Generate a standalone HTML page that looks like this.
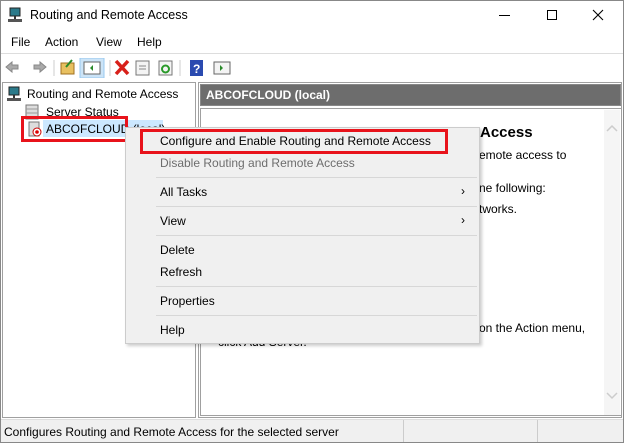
<!DOCTYPE html><html><head><style>
*{margin:0;padding:0;box-sizing:border-box}
body{width:624px;height:443px;overflow:hidden;background:#fff;font-family:"Liberation Sans",sans-serif;font-size:12px;color:#000;position:relative}
.a{position:absolute;white-space:nowrap}
.sep{position:absolute;left:156px;width:321px;height:1px;background:#d7d7d7}
</style></head><body>
<div class="a" style="left:0;top:0;width:624px;height:443px;border:1px solid #888"></div>
<svg class="a" style="left:7px;top:7px" width="16" height="16"><rect x="3" y="1" width="10" height="8" fill="#2b7a8a" stroke="#222"/><rect x="1" y="12" width="14" height="3" fill="#555"/><rect x="7" y="9" width="2" height="3" fill="#333"/></svg>
<div class="a" style="left:30px;top:8px;font-size:12.5px">Routing and Remote Access</div>
<div class="a" style="left:499px;top:15px;width:11px;height:1px;background:#000"></div>
<div class="a" style="left:547px;top:10px;width:10px;height:10px;border:1px solid #000"></div>
<svg class="a" style="left:592px;top:9px" width="12" height="12"><path d="M1 1L11 11M11 1L1 11" stroke="#000" stroke-width="1.1"/></svg>
<div class="a" style="left:11px;top:35px">File</div>
<div class="a" style="left:45px;top:35px">Action</div>
<div class="a" style="left:96px;top:35px">View</div>
<div class="a" style="left:137px;top:35px">Help</div>
<div class="a" style="left:1px;top:53px;width:622px;height:1px;background:#ddd"></div>
<div class="a" style="left:1px;top:54px;width:622px;height:27px;background:#fff"></div>
<svg class="a" style="left:4px;top:58px" width="240" height="20">
<path d="M2 9L8 4V7H14V11H8V14Z" fill="#aaa" stroke="#888"/>
<path d="M42 9L36 4V7H30V11H36V14Z" fill="#aaa" stroke="#888"/>
<line x1="50" y1="2" x2="50" y2="18" stroke="#ccc"/>
<rect x="57" y="5" width="13" height="11" fill="#e8c060" stroke="#a07020"/><path d="M62 9L68 2" stroke="#2a8a2a" stroke-width="2"/>
<rect x="76" y="0" width="24" height="20" fill="#cce4f7" stroke="#99c9ef"/><rect x="80" y="4" width="16" height="12" fill="#fff" stroke="#666"/><path d="M89 7L86 10L89 13Z" fill="#2a8a2a"/>
<line x1="106" y1="2" x2="106" y2="18" stroke="#ccc"/>
<path d="M112 3L124 16M124 3L112 16" stroke="#d8201a" stroke-width="3.5"/>
<rect x="132" y="3" width="13" height="14" fill="#f4f4f4" stroke="#777"/><path d="M135 8H142M135 11H142" stroke="#888"/>
<rect x="155" y="3" width="13" height="14" fill="#f4f4f4" stroke="#777"/><circle cx="161.5" cy="11" r="3.5" fill="none" stroke="#2a9a2a" stroke-width="2"/>
<line x1="176" y1="2" x2="176" y2="18" stroke="#ccc"/>
<rect x="186" y="2" width="13" height="16" fill="#2a4ab0"/><text x="189" y="15" fill="#fff" font-size="12" font-weight="bold">?</text>
<rect x="210" y="4" width="16" height="12" fill="#f4f4f4" stroke="#666"/><path d="M216 7L219 10L216 13Z" fill="#2a8a2a"/>
</svg>
<div class="a" style="left:2px;top:82px;width:194px;height:336px;border:1px solid #a0a0a0;background:#fff"></div>
<svg class="a" style="left:6px;top:86px" width="16" height="16"><rect x="3" y="1" width="10" height="8" fill="#2b7a8a" stroke="#222"/><rect x="1" y="12" width="14" height="3" fill="#555"/><rect x="7" y="9" width="2" height="3" fill="#333"/></svg>
<div class="a" style="left:27px;top:87px">Routing and Remote Access</div>
<svg class="a" style="left:24px;top:104px" width="16" height="16"><rect x="2" y="1" width="12" height="14" fill="#ddd" stroke="#777"/><path d="M2 5H14M2 9H14" stroke="#999"/></svg>
<div class="a" style="left:46px;top:105px">Server Status</div>
<div class="a" style="left:43px;top:120px;width:120px;height:17px;background:#cce8ff"></div>
<svg class="a" style="left:27px;top:121px" width="16" height="16"><rect x="2" y="1" width="10" height="14" fill="#ddd" stroke="#777"/><circle cx="10" cy="11" r="4" fill="#fff" stroke="#c00"/><circle cx="10" cy="11" r="1.8" fill="#d00"/></svg>
<div class="a" style="left:46px;top:122px">ABCOFCLOUD (local)</div>
<div class="a" style="left:21px;top:116px;width:107px;height:26px;border:3px solid #e8131b"></div>
<div class="a" style="left:198px;top:82px;width:424px;height:336px;border:1px solid #a0a0a0;background:#fff"></div>
<div class="a" style="left:200px;top:84px;width:421px;height:22px;background:#6d6d6d;border:1px solid #888"></div>
<div class="a" style="left:206px;top:88px;color:#fff;font-weight:bold">ABCOFCLOUD (local)</div>
<div class="a" style="left:200px;top:108px;width:421px;height:308px;border:1px solid #a0a0a0;border-right:none"></div>
<div class="a" style="left:604px;top:110px;width:16px;height:305px;background:#f5f5f5"></div>
<svg class="a" style="left:606px;top:124px" width="12" height="8"><path d="M1 7L6 2L11 7" stroke="#ccc" fill="none" stroke-width="1.5"/></svg>
<svg class="a" style="left:606px;top:392px" width="12" height="8"><path d="M1 1L6 6L11 1" stroke="#ccc" fill="none" stroke-width="1.5"/></svg>
<div class="a" style="left:480px;top:124px;font-size:15px;font-weight:bold">Access</div>
<div class="a" style="left:479px;top:148px">emote access to</div>
<div class="a" style="left:479px;top:181px">ne following:</div>
<div class="a" style="left:479px;top:202px">tworks.</div>
<div class="a" style="left:479px;top:321px">on the Action menu,</div>
<div class="a" style="left:218px;top:335px">click Add Server.</div>
<div class="a" style="left:1px;top:419px;width:622px;height:23px;background:#f0f0f0;border-top:1px solid #ddd"></div>
<div class="a" style="left:4px;top:425px">Configures Routing and Remote Access for the selected server</div>
<div class="a" style="left:403px;top:420px;width:1px;height:22px;background:#ccc"></div>
<div class="a" style="left:537px;top:420px;width:1px;height:22px;background:#ccc"></div>
<div class="a" style="left:125px;top:127px;width:355px;height:217px;background:#f0f0f0;border:1px solid #ccc;box-shadow:2px 2px 3px rgba(0,0,0,.2)"></div>
<div class="a" style="left:160px;top:134px">Configure and Enable Routing and Remote Access</div>
<div class="a" style="left:160px;top:156px;color:#6d6d6d">Disable Routing and Remote Access</div>
<div class="sep" style="top:177px"></div>
<div class="a" style="left:160px;top:185px">All Tasks</div>
<div class="a" style="left:461px;top:184px">›</div>
<div class="sep" style="top:206px"></div>
<div class="a" style="left:160px;top:214px">View</div>
<div class="a" style="left:461px;top:213px">›</div>
<div class="sep" style="top:235px"></div>
<div class="a" style="left:160px;top:243px">Delete</div>
<div class="a" style="left:160px;top:265px">Refresh</div>
<div class="sep" style="top:286px"></div>
<div class="a" style="left:160px;top:294px">Properties</div>
<div class="sep" style="top:315px"></div>
<div class="a" style="left:160px;top:323px">Help</div>
<div class="a" style="left:140px;top:129px;width:308px;height:25px;border:3px solid #e8131b"></div>
</body></html>
